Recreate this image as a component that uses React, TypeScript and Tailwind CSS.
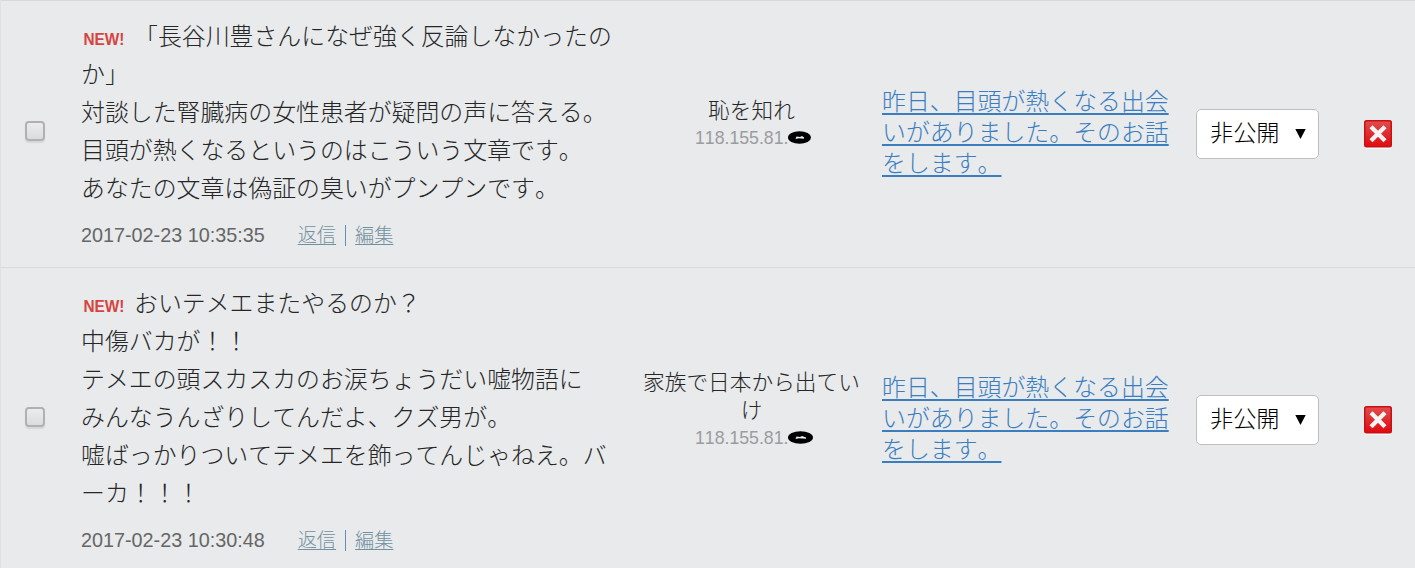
import React from 'react';

interface Comment {
  id: number;
  lines: string[];
  postedAt: string;
  author: string[];
  ip: string;
  maskWidth: number;
}

const comments: Comment[] = [
  {
    id: 1,
    lines: [
      '「長谷川豊さんになぜ強く反論しなかったの',
      'か」',
      '対談した腎臓病の女性患者が疑問の声に答える。',
      '目頭が熱くなるというのはこういう文章です。',
      'あなたの文章は偽証の臭いがプンプンです。',
    ],
    postedAt: '2017-02-23 10:35:35',
    author: ['恥を知れ'],
    ip: '118.155.81.',
    maskWidth: 23,
  },
  {
    id: 2,
    lines: [
      'おいテメエまたやるのか？',
      '中傷バカが！！',
      'テメエの頭スカスカのお涙ちょうだい嘘物語に',
      'みんなうんざりしてんだよ、クズ男が。',
      '嘘ばっかりついてテメエを飾ってんじゃねえ。バ',
      'ーカ！！！',
    ],
    postedAt: '2017-02-23 10:30:48',
    author: ['家族で日本から出てい', 'け'],
    ip: '118.155.81.',
    maskWidth: 25,
  },
];

const articleTitle = ['昨日、目頭が熱くなる出会', 'いがありました。そのお話', 'をします。'];

function NewBadge() {
  return (
    <svg className="mr-[8px] inline-block align-[-4px]" width="45" height="20" viewBox="0 0 45 20">
      <text
        x="2.5"
        y="16"
        textLength="41"
        lengthAdjust="spacingAndGlyphs"
        className="fill-[#d6443f] font-['Liberation_Sans',Arial,sans-serif] text-[16.5px] font-bold"
      >
        NEW!
      </text>
    </svg>
  );
}

function Checkbox() {
  return (
    <button
      type="button"
      role="checkbox"
      aria-checked="false"
      className="block h-5 w-5 rounded-[4px] border-2 border-[#b0b1b2] bg-linear-to-b from-[#ececec] to-[#dcdcdc] shadow-[0_2px_1px_#d6d7d8]"
    />
  );
}

function MaskedIp({ ip, maskWidth }: { ip: string; maskWidth: number }) {
  return (
    <div className="flex h-[30px] items-center pl-[64px] font-['Liberation_Sans',Arial,sans-serif] text-[17.7px] font-normal text-[#9b9c9d]">
      {ip}
      <svg width={maskWidth} height="13" viewBox={`0 0 ${maskWidth} 13`} className="mb-[2px]">
        <ellipse cx={maskWidth / 2} cy="6.5" rx={maskWidth / 2} ry="6.2" fill="#000" />
        <path d={`M7.5 8 L8.5 5.5 L12 6 L14 5 L${maskWidth - 7} 6.5 L${maskWidth - 7} 7.8 L11 7.2 Z`} fill="#f0f0f0" />
      </svg>
    </div>
  );
}

function StatusSelect() {
  return (
    <button
      type="button"
      className="flex h-[50px] w-[123px] items-center justify-between rounded-[5px] border border-[#bdbebf] bg-white pr-[12px] pb-[5px] pl-[13px] text-[23.2px] font-light text-black"
    >
      非公開
      <svg width="11" height="10" viewBox="0 0 11 10" className="mt-[5px]">
        <path d="M0.3 0H10.7L5.5 10Z" fill="#000" />
      </svg>
    </button>
  );
}

function DeleteIcon() {
  return (
    <svg width="28" height="29" viewBox="0 0 28 29" className="block">
      <defs>
        <linearGradient id="deleteRed" x1="0" y1="0" x2="0" y2="1">
          <stop offset="0" stopColor="#e24b4b" />
          <stop offset="0.5" stopColor="#dd2d2e" />
          <stop offset="1" stopColor="#e10b10" />
        </linearGradient>
      </defs>
      <rect x="0.5" y="2" width="27" height="27" rx="2.5" fill="#fafafa" />
      <rect x="0" y="0" width="28" height="27.5" rx="2.5" fill="#c90f14" />
      <rect x="1.5" y="1.5" width="25" height="24.5" rx="1.5" fill="url(#deleteRed)" />
      <path d="M7 6.8L21 20.8M21 6.8L7 20.8" stroke="#f8f4f4" strokeWidth="4.4" />
    </svg>
  );
}

function CommentRow({ comment }: { comment: Comment }) {
  return (
    <div className="grid grid-cols-[80px_550px_241px_324px_168px_1fr] items-center border-t border-[#d9dadc]">
      <div className="pb-[6px] pl-6">
        <Checkbox />
      </div>

      <div className="pt-[15px] pb-[12px] whitespace-nowrap">
        <div className="text-[23.9px] leading-[38px] text-[#262626]">
          {comment.lines.map((line, index) => (
            <div key={line} className="h-[38px]">
              {index === 0 && <NewBadge />}
              {line}
            </div>
          ))}
        </div>
        <div className="mt-[11px] flex h-[38px] items-center text-[19.2px]">
          <span className="mr-[33px] font-['Liberation_Sans',Arial,sans-serif] text-[19.8px] font-normal text-[#666]">
            {comment.postedAt}
          </span>
          <a href="#reply" className="mb-[3px] text-[#7390a0] underline underline-offset-2">返信</a>
          <span className="mx-[9px] mb-[2px] h-[21px] w-px bg-[#5d8fc2]" />
          <a href="#edit" className="mb-[3px] text-[#7390a0] underline underline-offset-2">編集</a>
        </div>
      </div>

      <div className="pb-[20px] whitespace-nowrap">
        <div className="text-center text-[21.7px] leading-7 text-[#262626]">
          {comment.author.map((line) => (
            <div key={line}>{line}</div>
          ))}
        </div>
        <MaskedIp ip={comment.ip} maskWidth={comment.maskWidth} />
      </div>

      <a
        href="#article"
        className="pb-[7px] pl-[10px] text-[23.9px] leading-[31px] whitespace-nowrap text-[#3b7ec0] underline decoration-2 underline-offset-[3px]"
      >
        {articleTitle.map((line) => (
          <span key={line} className="block">{line}</span>
        ))}
      </a>

      <StatusSelect />
      <DeleteIcon />
    </div>
  );
}

export default function App() {
  return (
    <div className="h-[568px] w-[1415px] overflow-hidden border-l border-[#e0e1e3] bg-[#e8eaec] font-['Noto_Sans_CJK_JP',sans-serif] font-light [font-kerning:none] [text-spacing-trim:space-all]">
      {comments.map((comment) => (
        <CommentRow key={comment.id} comment={comment} />
      ))}
    </div>
  );
}
